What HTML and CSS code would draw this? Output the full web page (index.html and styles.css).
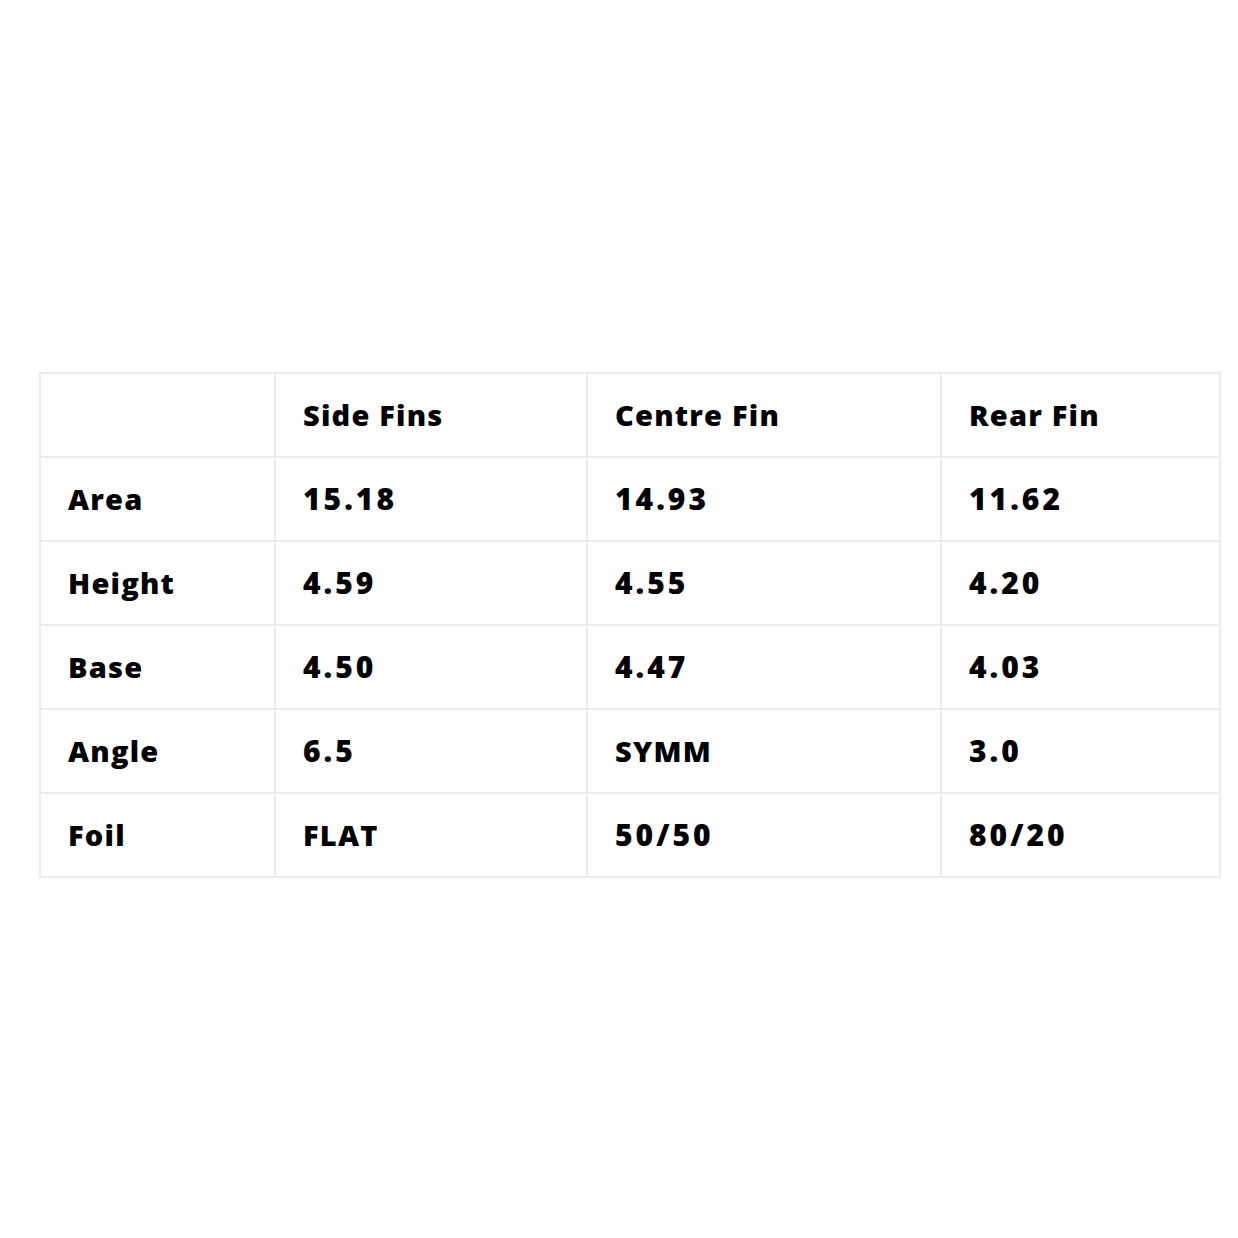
FILE: index.html
```html
<!DOCTYPE html>
<html>
<head>
<meta charset="utf-8">
<link rel="stylesheet" href="styles.css">
</head>
<body>
<div class="page">
  <div class="specs">
    <div class="cell"></div>
    <div class="cell">Side Fins</div>
    <div class="cell">Centre Fin</div>
    <div class="cell">Rear Fin</div>

    <div class="cell">Area</div>
    <div class="cell num">15.18</div>
    <div class="cell num">14.93</div>
    <div class="cell num">11.62</div>

    <div class="cell">Height</div>
    <div class="cell num">4.59</div>
    <div class="cell num">4.55</div>
    <div class="cell num">4.20</div>

    <div class="cell">Base</div>
    <div class="cell num">4.50</div>
    <div class="cell num">4.47</div>
    <div class="cell num">4.03</div>

    <div class="cell">Angle</div>
    <div class="cell num">6.5</div>
    <div class="cell">SYMM</div>
    <div class="cell num">3.0</div>

    <div class="cell">Foil</div>
    <div class="cell">FLAT</div>
    <div class="cell num">50/50</div>
    <div class="cell num">80/20</div>
  </div>
</div>
</body>
</html>
```

FILE: styles.css
```css
html, body {
  margin: 0;
  padding: 0;
  background: #ffffff;
}
.page {
  padding: 372px 0 0 39px;
}
.specs {
  display: grid;
  grid-template-columns: 233px 310px 352px 277px;
  grid-auto-rows: 82px;
  gap: 2px;
  padding: 2px;
  width: 1178px;
  background: #ececec;
  font-family: "Open Sans", "Liberation Sans", sans-serif;
  font-weight: 800;
  font-size: 29px;
  letter-spacing: 1.2px;
  color: #000;
}
.cell {
  background: #fff;
  display: flex;
  align-items: center;
  padding-left: 27px;
  padding-bottom: 2px;
}
.num {
  font-size: 30px;
  letter-spacing: 3px;
}
```
